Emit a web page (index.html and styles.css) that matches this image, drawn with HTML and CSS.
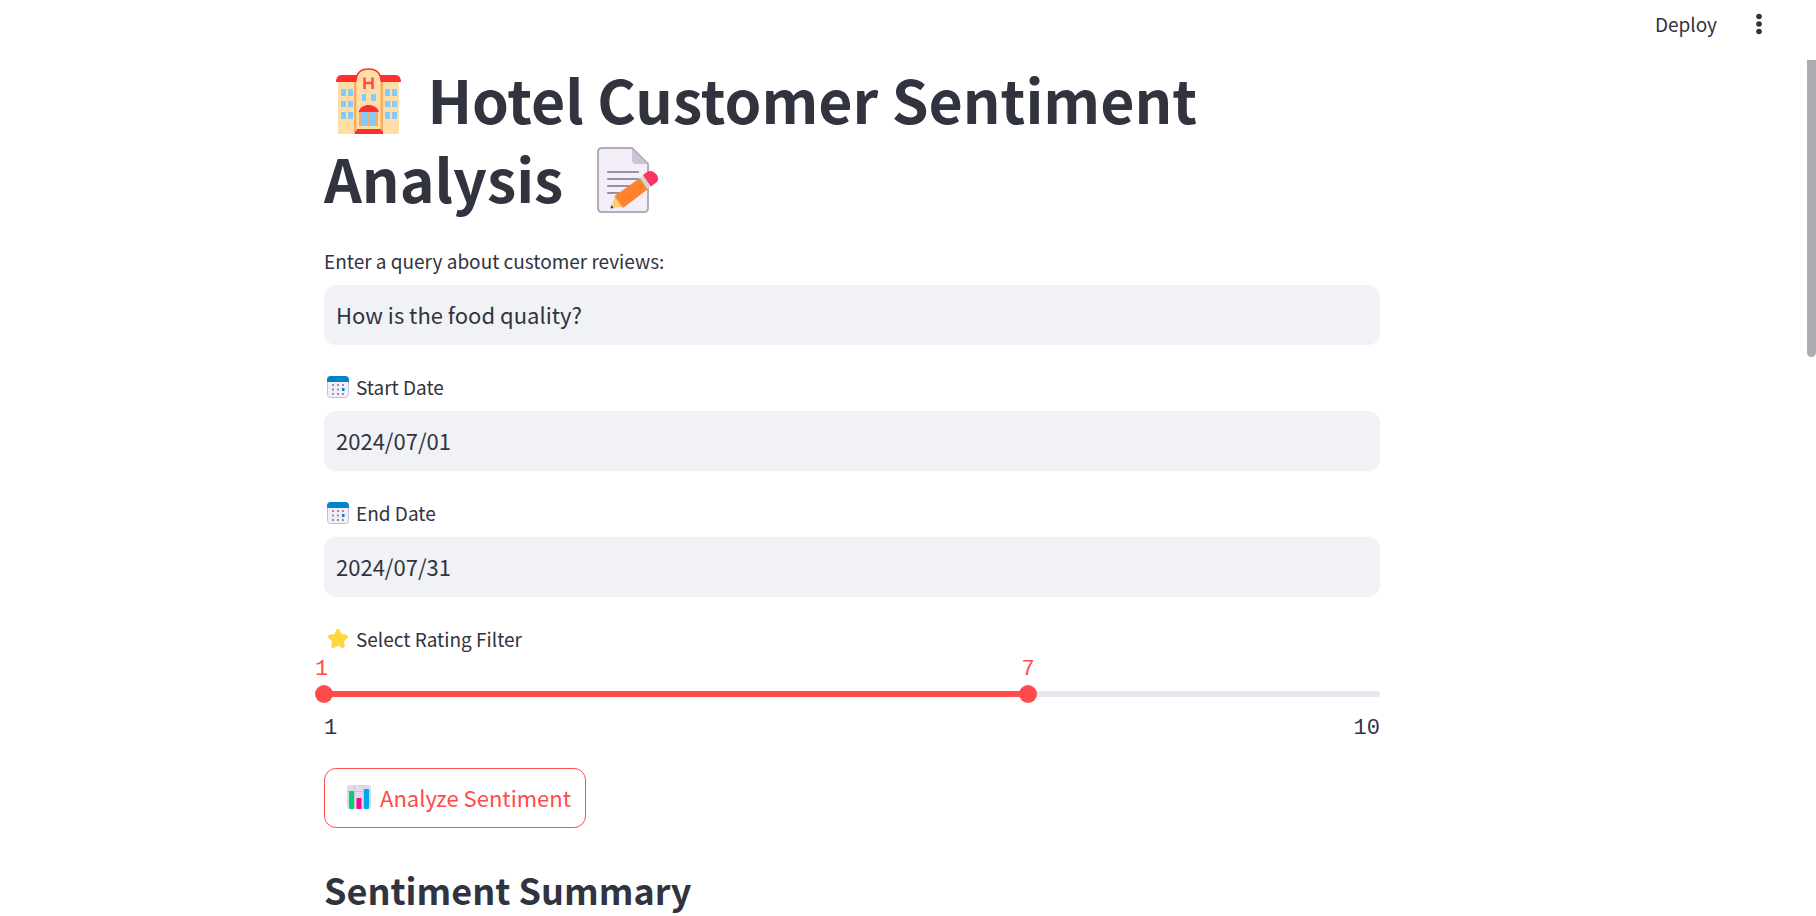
FILE: index.html
```html
<!DOCTYPE html>
<html lang="en">
<head>
<meta charset="utf-8">
<title>Hotel Customer Sentiment Analysis</title>
<link rel="stylesheet" href="styles.css">
</head>
<body>
<header class="toolbar">
  <button class="deploy" type="button">Deploy</button>
  <button class="menu" type="button" aria-label="Menu">
    <svg width="24" height="24" viewBox="0 0 24 24" fill="currentColor"><circle cx="12" cy="4.500" r="2.800"/><circle cx="12" cy="12" r="2.800"/><circle cx="12" cy="19.500" r="2.800"/></svg>
  </button>
</header>
<main class="main">
  <form class="content">
    <h1 class="title">
      <svg class="title-icon" viewBox="0 0 66 66" aria-hidden="true">
        <path fill="#ffdda6" d="M2 10h61v56H2z"/>
        <path fill="#f4ae62" d="M18 12h3v54h-3zM44 12h3v54h-3z"/>
        <path fill="#ff2f2f" d="M5 7h55c3 0 5 3 5 7H0c0-4 2-7 5-7z"/>
        <path fill="#ffdda6" stroke="#ff2f2f" stroke-width="1.500" d="M20 14C20 5 25 1 32.500 1S45 5 45 14"/>
        <path fill="#ffdda6" d="M20.500 13h24v48h-24z"/>
        <path fill="none" stroke="#ff4a45" stroke-width="2.500" d="M28.500 9.500v11.500M36.500 9.500v11.500M28.500 15h8"/>
        <g fill="#82caff"><path d="M5 21h5v7H5zM12 21h5v7h-5zM5 33h5v6H5zM12 33h5v6h-5zM5 44h5v7H5zM12 44h5v7h-5zM49 21h5v7h-5zM56 21h5v7h-5zM49 33h5v6h-5zM56 33h5v6h-5zM49 44h5v7h-5zM56 44h5v7h-5zM26 26h4v7h-4zM35 26h5v7h-5z"/></g>
        <path fill="#f4ae62" d="M23 43h19v15H23z"/><path fill="#82caff" d="M26 44h5.500v14H26zM34 44h5.500v14H34z"/>
        <path fill="#ff2f2f" d="M22.500 44C24 39 28 37 32.500 37s9 2 10.500 7zM21 61h24v1.500l2 1V66H19v-2.500l2-1z"/>
      </svg>
      Hotel Customer Sentiment Analysis
      <svg class="title-icon title-icon-end" viewBox="0 0 66 66" aria-hidden="true">
        <path fill="#f3eef8" stroke="#b4acbc" stroke-width="2" stroke-linejoin="round" d="M5 1h30l16 16v44q0 4-4 4H5q-4 0-4-4V5q0-4 4-4z"/>
        <path fill="#cdc4d6" d="M35 2l15 15H39q-4 0-4-4z"/>
        <path stroke="#998ea4" stroke-width="2.200" stroke-linecap="round" d="M11 25h30M11 32h30M11 39h26M11 46h14"/>
        <path fill="#ffce7c" d="M18 49l-4 12 12-1z"/><path fill="#413344" d="M14.500 58l-1 3.500 3-.5z"/>
        <path fill="#ff822d" d="M17.500 49L43 31l8 11-25 19z"/>
        <path fill="#d3d3d3" d="M43 31l4-3 7 11-4 3z"/><path fill="#ff3264" d="M46 28l4-3c6-4 14 5 10 10l-6 4.500z"/>
      </svg>
    </h1>

    <div class="field">
      <label class="label" for="query">Enter a query about customer reviews:</label>
      <input class="input" id="query" type="text" value="How is the food quality?">
    </div>
    <div class="field">
      <label class="label" for="start"><svg class="label-icon" viewBox="0 0 22 22" aria-hidden="true"><use href="#calendar"/></svg>Start Date</label>
      <input class="input" id="start" type="text" value="2024/07/01">
    </div>
    <div class="field">
      <label class="label" for="end"><svg class="label-icon" viewBox="0 0 22 22" aria-hidden="true"><use href="#calendar"/></svg>End Date</label>
      <input class="input" id="end" type="text" value="2024/07/31">
    </div>
    <div class="rating" role="group" aria-labelledby="rating-label">
      <label class="label" id="rating-label" for="low"><svg class="label-icon" viewBox="0 0 22 22" aria-hidden="true"><path fill="#fdd73c" stroke="#fdd73c" stroke-width="4" stroke-linejoin="round" d="M11 3l2.300 5 5.600.7-4.100 3.800 1 5.500-4.800-2.600L6.200 18l1-5.500-4.100-3.800 5.600-.7z"/></svg>Select Rating Filter</label>
      <div class="slider">
        <div class="track"><div class="track-fill"></div></div>
        <output class="value value-low" for="low">1</output>
        <output class="value value-high" for="high">7</output>
        <input class="range" id="low" type="range" min="1" max="10" value="1">
        <input class="range" id="high" type="range" min="1" max="10" value="7" aria-label="Maximum rating">
      </div>
      <div class="ticks"><span>1</span><span>10</span></div>
    </div>
    <button class="analyze" type="button">
      <svg class="button-icon" viewBox="0 0 24 24" aria-hidden="true">
        <rect width="24" height="24" rx="3" fill="#e1d8ec"/>
        <path stroke="#cdc4d6" d="M0 6.500h24M0 15.500h24M7.500 0v24M16.500 0v24"/>
        <rect x="2" y="6" width="5" height="18" rx="1" fill="#00d26a"/><rect x="9.500" y="13" width="5" height="11" rx="1" fill="#fc0590"/><rect x="17" y="4" width="5" height="20" rx="1" fill="#00a6ed"/>
      </svg>Analyze Sentiment</button>
    <h2 class="subtitle">Sentiment Summary</h2>
  </form>
</main>
<div class="scroll-thumb"></div>
<svg class="symbols" aria-hidden="true">
  <symbol id="calendar" viewBox="0 0 22 22">
    <rect x=".5" y=".5" width="21" height="21" rx="3" fill="#f3eef8" stroke="#c9c0d2"/>
    <path fill="#0084ce" d="M0 6V4q0-4 4-4h14q4 0 4 4v2z"/>
    <path fill="#998ea4" d="M5 8h2v2H5zM10 8h2v2h-2zM15 8h2v2h-2zM5 12.500h2v2H5zM10 12.500h2v2h-2zM5 17h2v2H5zM10 17h2v2h-2zM15 17h2v2h-2z"/>
    <path fill="#0084ce" d="M15 12h2.500v3H15z"/>
  </symbol>
</svg>
</body>
</html>
```
FILE: styles.css
```css
* { box-sizing: border-box; }

body {
  margin: 0;
  height: 100vh;
  overflow: hidden;
  background: #fff;
  color: #31333f;
  font-family: "Noto Sans CJK SC", "Noto Sans", sans-serif;
  font-size: 22px;
}

button, input { font: inherit; color: inherit; }

.toolbar {
  height: 59px;
  padding: 0 45px 11px;
  display: flex;
  align-items: center;
  justify-content: flex-end;
  gap: 30px;
}

.deploy, .menu {
  border: 0;
  padding: 0;
  background: none;
}

.deploy { font-size: 19px; line-height: 36px; }
.menu { display: flex; }

.main { padding: 0 136px 0 24px; }

.content {
  max-width: 1056px;
  margin: 0 auto;
  display: flex;
  flex-direction: column;
  gap: 24px;
}

.title {
  margin: 0 0 2px;
  font-size: 59px;
  font-weight: 700;
  line-height: 79px;
}

.title-icon {
  width: 66px;
  height: 66px;
  margin: 0 12px;
  vertical-align: -10px;
}

.title-icon-end { margin-left: 20px; }

.field {
  display: flex;
  flex-direction: column;
  gap: 6px;
}

.label {
  display: flex;
  align-items: center;
  font-size: 19px;
  line-height: 36px;
}

.label-icon {
  width: 22px;
  height: 22px;
  margin: 0 7px 0 3px;
}

.input {
  width: 100%;
  height: 60px;
  padding: 0 12px 2px;
  border: 0;
  border-radius: 12px;
  background: #f0f2f6;
}

.slider {
  position: relative;
  padding: 34px 0 16px;
}

.track {
  height: 6px;
  border-radius: 3px;
  background: #e4e9f0;
}

.track-fill {
  width: 66.667%;
  height: 100%;
  background: #ff4b4b;
}

.value, .ticks {
  font-family: "Liberation Mono", monospace;
  font-size: 22px;
  line-height: 32px;
}

.value {
  position: absolute;
  top: -3px;
  color: #ff4b4b;
}

.value-low { left: -9px; }
.value-high { left: 66.667%; transform: translateX(-50%); }

.range {
  position: absolute;
  top: 28px;
  left: -9px;
  width: calc(100% + 18px);
  height: 18px;
  margin: 0;
  appearance: none;
  background: none;
  pointer-events: none;
}

.range::-webkit-slider-thumb {
  appearance: none;
  width: 18px;
  height: 18px;
  border-radius: 50%;
  background: #ff4b4b;
  pointer-events: auto;
}

.ticks {
  display: flex;
  justify-content: space-between;
}

.analyze {
  align-self: flex-start;
  display: flex;
  align-items: center;
  gap: 9px;
  height: 60px;
  margin-top: -1px;
  padding: 0 14px 2px 22px;
  border: 1px solid #ff4b4b;
  border-radius: 12px;
  background: #fff;
  color: #ff4b4b;
}

.button-icon { width: 24px; height: 24px; }

.subtitle {
  margin: 12px 0 0;
  font-size: 36px;
  font-weight: 700;
  line-height: 50px;
}

.scroll-thumb {
  position: absolute;
  top: 60px;
  right: 0;
  width: 9px;
  height: 297px;
  border-radius: 0 0 5px 5px;
  background: #adacb1;
}

.symbols { position: absolute; width: 0; height: 0; }
```
